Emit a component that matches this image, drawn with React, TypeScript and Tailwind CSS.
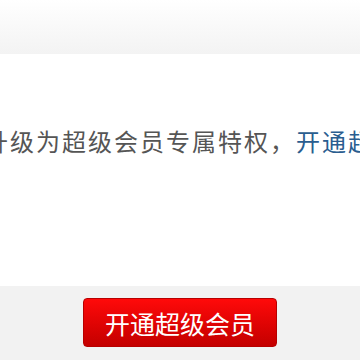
export default function App() {
  return (
    <div
      className="w-[360px] h-[360px] overflow-hidden bg-white flex flex-col"
      style={{ fontFamily: '"Noto Sans CJK SC", "Noto Sans", sans-serif' }}
    >
      <div className="h-[54px] shrink-0 bg-gradient-to-b from-white to-[#f3f3f3]" />
      <div className="flex-1 pt-[70px] overflow-hidden">
        <p className="whitespace-nowrap text-[24px] leading-[34px] tracking-[2px] text-[#555] ml-[-16px]">
          升级为超级会员专属特权，<span className="text-[#2a5d8f]">开通超级会员</span>
        </p>
      </div>
      <div className="h-[74px] shrink-0 bg-[#f2f2f2] flex justify-center pt-[12px]">
        <button className="w-[194px] h-[49px] rounded-[4px] border border-[#b80000] bg-gradient-to-b from-[#ff0a0a] to-[#c40000] text-white text-[25px] leading-none pt-[2px]">
          开通超级会员
        </button>
      </div>
    </div>
  );
}
